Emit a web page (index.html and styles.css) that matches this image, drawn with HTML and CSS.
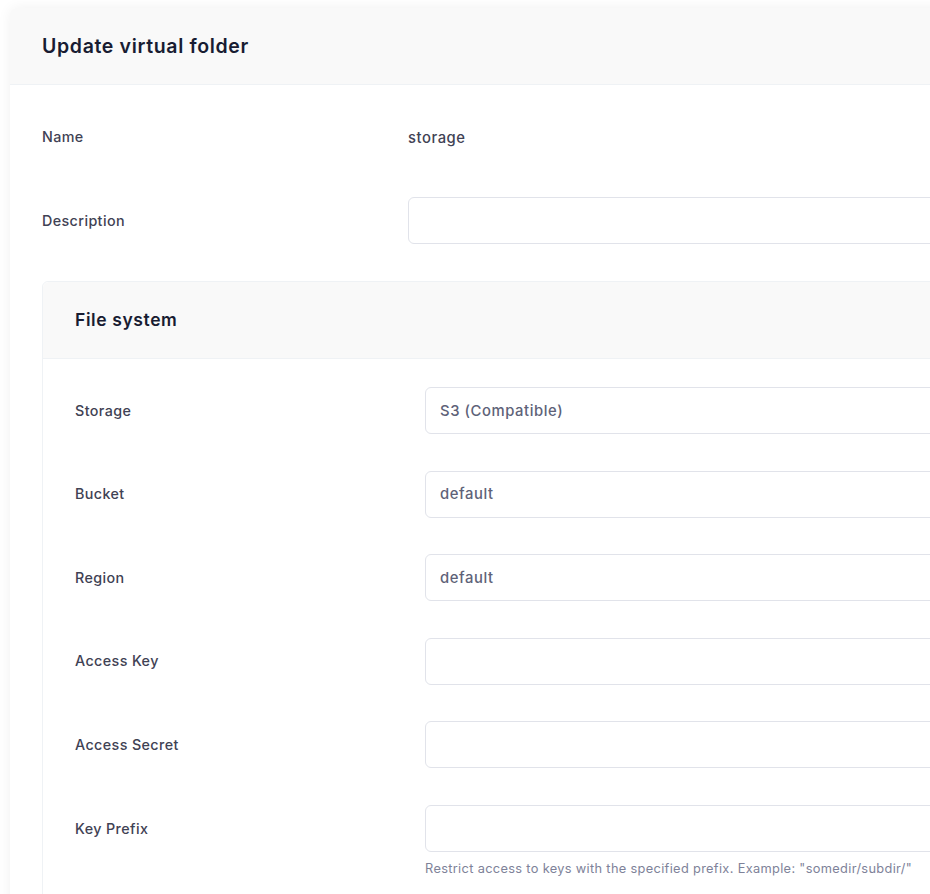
FILE: index.html
```html
<!DOCTYPE html>
<html lang="en">
<head>
<meta charset="utf-8">
<title>Update virtual folder</title>
<link rel="stylesheet" href="styles.css">
</head>
<body>
<div class="page">
  <div class="card">
    <div class="card-header">
      <h2 class="card-title">Update virtual folder</h2>
    </div>
    <div class="card-body">
      <div class="row">
        <label class="label">Name</label>
        <div class="field"><span class="plain">storage</span></div>
      </div>
      <div class="row">
        <label class="label">Description</label>
        <div class="field"><input class="input" type="text" value=""></div>
      </div>
      <div class="subcard">
        <div class="subcard-header">
          <h3 class="subcard-title">File system</h3>
        </div>
        <div class="subcard-body">
          <div class="row sub">
            <label class="label">Storage</label>
            <div class="field"><div class="input select">S3 (Compatible)</div></div>
          </div>
          <div class="row sub">
            <label class="label">Bucket</label>
            <div class="field"><input class="input" type="text" value="default"></div>
          </div>
          <div class="row sub">
            <label class="label">Region</label>
            <div class="field"><input class="input" type="text" value="default"></div>
          </div>
          <div class="row sub">
            <label class="label">Access Key</label>
            <div class="field"><input class="input" type="text" value=""></div>
          </div>
          <div class="row sub">
            <label class="label">Access Secret</label>
            <div class="field"><input class="input" type="text" value=""></div>
          </div>
          <div class="row sub">
            <label class="label">Key Prefix</label>
            <div class="field">
              <input class="input" type="text" value="">
              <div class="help">Restrict access to keys with the specified prefix. Example: "somedir/subdir/"</div>
            </div>
          </div>
        </div>
      </div>
    </div>
  </div>
</div>
</body>
</html>
```

FILE: styles.css
```css
html, body {
  margin: 0;
  padding: 0;
  overflow: hidden;
  background: #ffffff;
  font-family: Inter, "Noto Sans", "Liberation Sans", sans-serif;
  color: #3f4254;
}

.page {
  padding: 8px 0 0 10px;
  width: 1200px;
}

.card {
  width: 1170px;
  background: #ffffff;
  border-radius: 6px 6px 0 0;
  box-shadow: 0 0 14px rgba(0, 0, 0, 0.06);
}

.card-header {
  height: 76px;
  background: #f9f9f9;
  border-bottom: 1px solid #eff2f5;
  border-radius: 6px 6px 0 0;
  display: flex;
  align-items: center;
  padding-left: 32px;
}

.card-title {
  margin: 0;
  font-size: 19.5px;
  font-weight: 600;
  color: #181c32;
  letter-spacing: 0.65px;
}

.card-body {
  padding: 28.5px 32px 0 32px;
}

.row {
  display: flex;
  align-items: flex-start;
  margin-bottom: 36.6px;
}

.label {
  box-sizing: border-box;
  width: 366px;
  flex: none;
  height: 47px;
  padding-bottom: 1px;
  display: flex;
  align-items: center;
  font-size: 14.3px;
  font-weight: 500;
  letter-spacing: 0.4px;
  color: #3f4254;
}

.row.sub .label {
  width: 350px;
}

.field {
  flex: 1;
}

.plain {
  display: flex;
  align-items: center;
  height: 47px;
  padding-top: 1px;
  box-sizing: border-box;
  font-size: 14.8px;
  font-weight: 500;
  letter-spacing: 0.55px;
  color: #3f4254;
}

.input {
  box-sizing: border-box;
  display: flex;
  align-items: center;
  width: 100%;
  height: 47px;
  padding: 0 14px;
  border: 1px solid #e1e3ea;
  border-radius: 6px;
  background: #ffffff;
  font-family: Inter, "Noto Sans", "Liberation Sans", sans-serif;
  font-size: 14.8px;
  font-weight: 500;
  letter-spacing: 0.58px;
  color: #5e6278;
  outline: none;
}

.subcard {
  border: 1px solid #eff2f5;
  border-radius: 6px 6px 0 0;
}

.subcard-header {
  height: 76px;
  background: #f9f9f9;
  border-bottom: 1px solid #eff2f5;
  border-radius: 6px 6px 0 0;
  display: flex;
  align-items: center;
  padding-left: 32px;
}

.subcard-title {
  margin: 0;
  font-size: 17.5px;
  font-weight: 600;
  letter-spacing: 0.6px;
  color: #181c32;
}

.subcard-body {
  padding: 28.4px 32px 0 32px;
}

.help {
  margin-top: 9px;
  font-size: 12.8px;
  font-weight: 400;
  letter-spacing: 0.33px;
  color: #7e8299;
}
```
